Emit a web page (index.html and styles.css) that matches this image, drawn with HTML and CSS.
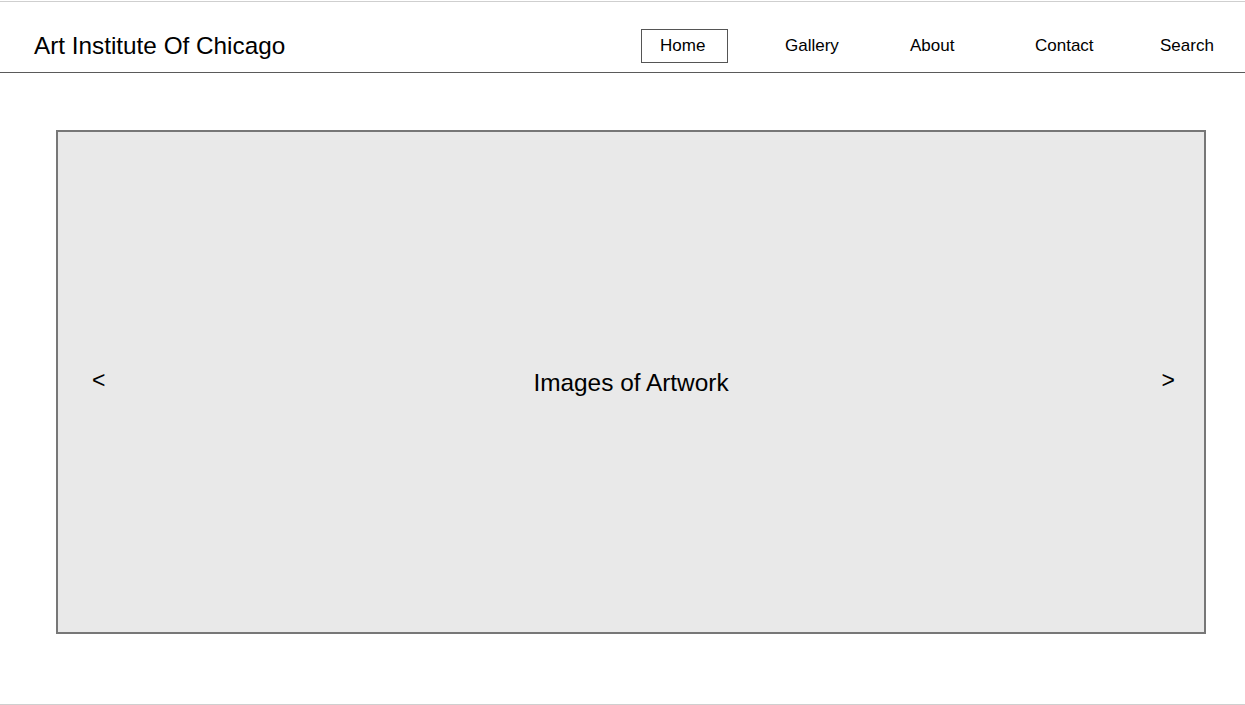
FILE: index.html
```html
<!DOCTYPE html>
<html>
<head>
<meta charset="utf-8">
<link rel="stylesheet" href="styles.css">
</head>
<body>
<div class="page">
  <header class="header">
    <div class="title">Art Institute Of Chicago</div>
    <nav class="nav">
      <a class="nav-item active">Home</a>
      <a class="nav-item">Gallery</a>
      <a class="nav-item">About</a>
      <a class="nav-item">Contact</a>
      <a class="nav-item">Search</a>
    </nav>
  </header>
  <main class="main">
    <div class="carousel">
      <span class="arrow prev">&lt;</span>
      <span class="caption">Images of Artwork</span>
      <span class="arrow next">&gt;</span>
    </div>
  </main>
  <footer class="footer"></footer>
</div>
</body>
</html>
```
FILE: styles.css
```css
html, body {
  margin: 0;
  padding: 0;
  background: #fff;
}
body {
  font-family: "Liberation Sans", Arial, sans-serif;
  color: #000;
}
.page {
  padding-top: 1px;
}
.header {
  border-top: 1px solid #cfcfcf;
  border-bottom: 1px solid #5a5a5a;
  display: flex;
  align-items: center;
  justify-content: space-between;
  padding: 27px 17px 9px 34px;
}
.title {
  font-size: 24.3px;
}
.nav {
  display: flex;
  gap: 38px;
}
.nav-item {
  width: 87px;
  height: 34px;
  box-sizing: border-box;
  display: flex;
  align-items: center;
  padding-left: 18px;
  font-size: 17px;
  border: 1px solid transparent;
}
.nav-item.active {
  border: 1px solid #555;
}
.main {
  padding: 57px 39px 70px 56px;
}
.carousel {
  height: 504px;
  box-sizing: border-box;
  background: #e9e9e9;
  border: 2px solid #777;
  display: grid;
  grid-template-columns: 1fr auto 1fr;
  align-items: center;
}
.arrow {
  font-size: 23px;
  margin-top: -4px;
}
.prev {
  justify-self: start;
  margin-left: 34px;
}
.next {
  justify-self: end;
  margin-right: 29px;
}
.caption {
  font-size: 24.4px;
  margin-top: 1px;
}
.footer {
  border-top: 1px solid #cfcfcf;
}
```
